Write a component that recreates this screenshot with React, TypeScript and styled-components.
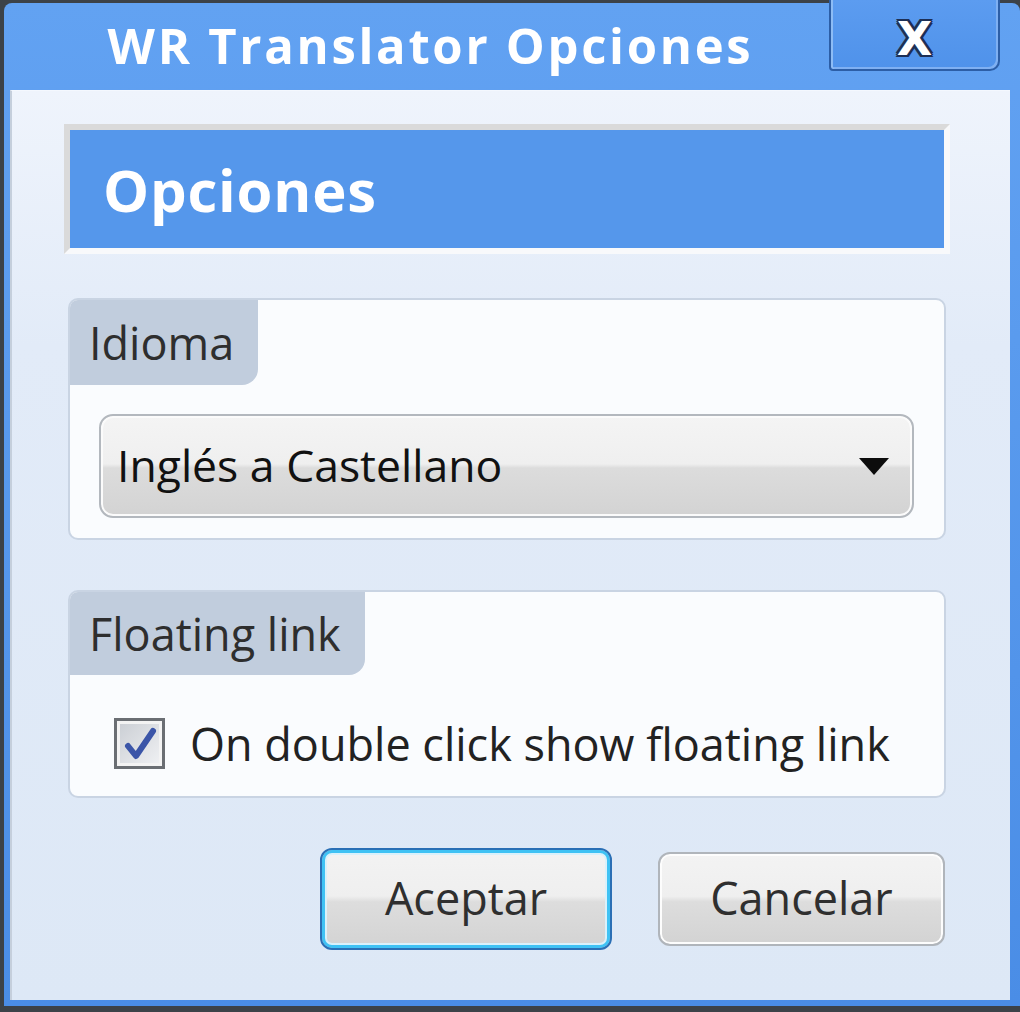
import React from "react";
import styled, { createGlobalStyle } from "styled-components";

const Global = createGlobalStyle`
  html, body { margin: 0; padding: 0; background: #3c4248; }
  body { font-family: "Open Sans", "DejaVu Sans", sans-serif; }
  * { box-sizing: border-box; }
`;

const Frame = styled.div`
  width: 1020px;
  height: 1012px;
  background: #3c4248;
  padding: 3px 0 6px 4px;
  display: flex;
`;

const Window = styled.div`
  flex: 1;
  display: flex;
  flex-direction: column;
  background: linear-gradient(#62a2f2, #4a8de6);
  border-radius: 8px 8px 0 0;
  padding: 0 10px 6px 6px;
`;

const TitleBar = styled.div`
  height: 87px;
  display: flex;
  align-items: flex-start;
`;

const Title = styled.div`
  flex: 1;
  text-align: center;
  color: #ffffff;
  font-weight: 700;
  font-size: 49px;
  line-height: 1;
  padding-top: 18px;
  padding-left: 22px;
  letter-spacing: 2.7px;
`;

const CloseButton = styled.div`
  width: 171px;
  height: 71px;
  margin-top: -3px;
  margin-right: 10px;
  background: linear-gradient(#5c9cf0, #4f92ea);
  border: 2px solid #2c5ea6;
  border-top: none;
  border-radius: 0 0 10px 4px;
  box-shadow: inset 2px 0 0 #8dbcf5, inset -2px -2px 0 #7fb0f2;
  display: flex;
  justify-content: center;
  align-items: flex-start;
  padding-top: 16px;
  color: #fff;
  font-family: "DejaVu Sans", sans-serif;
  font-weight: 700;
  font-size: 46px;
  line-height: 1;
  text-shadow: -2px 0 0 #1d2f55, 2px 0 0 #1d2f55, 0 -2px 0 #1d2f55, 0 2px 0 #1d2f55,
    -2px -2px 0 #1d2f55, 2px 2px 0 #1d2f55, -2px 2px 0 #1d2f55, 2px -2px 0 #1d2f55;
`;

const Body = styled.div`
  flex: 1;
  background: linear-gradient(#eff4fc 0%, #e2ebf8 28%, #dde8f6 100%);
  border-left: 2px solid #c5cfdc;
  border-top: 1px solid #f4f8fe;
  padding: 33px 60px 0 52px;
  display: flex;
  flex-direction: column;
`;

const Header = styled.div`
  height: 130px;
  border-style: solid;
  border-width: 6px;
  border-color: #dadada #f8f9fb #f8f9fb #dadada;
  background: #5597eb;
  display: flex;
  align-items: center;
  padding-left: 33px;
  color: #fff;
  font-weight: 700;
  font-size: 58px;
  letter-spacing: 0.8px;
`;

const Group = styled.div<{ $top: number; $height: number }>`
  margin: ${(p) => p.$top}px 4px 0 4px;
  height: ${(p) => p.$height}px;
  background: #fafcfe;
  border: 2px solid #c9d4e3;
  border-radius: 10px;
  display: flex;
  flex-direction: column;
  align-items: flex-start;
  overflow: hidden;
`;

const Tab = styled.div<{ $height: number }>`
  height: ${(p) => p.$height}px;
  background: #c1cddd;
  border-bottom-right-radius: 16px;
  padding: 0 24px 0 19px;
  display: flex;
  align-items: center;
  color: #2e2e2e;
  font-size: 45px;
`;

const Select = styled.div`
  align-self: stretch;
  margin: 29px 30px 0 29px;
  height: 104px;
  border: 2px solid #b3b8be;
  border-radius: 14px;
  box-shadow: inset 0 0 0 2px #fbfbfb;
  background: linear-gradient(#f4f4f4 0%, #efefef 48%, #dcdcdc 52%, #d3d3d3 100%);
  display: flex;
  align-items: center;
  justify-content: space-between;
  padding: 0 23px 4px 16px;
  color: #111;
  font-size: 44.5px;
`;

const Arrow = styled.div`
  width: 0;
  height: 0;
  border-left: 15px solid transparent;
  border-right: 15px solid transparent;
  border-top: 17px solid #0c0c0c;
  margin-top: 4px;
`;

const CheckRow = styled.label`
  display: flex;
  align-items: center;
  gap: 25px;
  margin: 38px 0 0 44px;
  color: #222;
  font-size: 45px;
`;

const Box = styled.div`
  width: 51px;
  height: 51px;
  border: 3px solid #6a6e73;
  box-shadow: inset 0 0 0 3px #f3f3f3;
  background: linear-gradient(135deg, #c9cdd3, #f1f2f4);
  display: flex;
  align-items: center;
  justify-content: center;
`;

const Buttons = styled.div`
  display: flex;
  justify-content: flex-end;
  align-items: center;
  gap: 46px;
  margin: 50px 5px 0 0;
`;

const Button = styled.div<{ $focused?: boolean }>`
  width: ${(p) => (p.$focused ? 292 : 287)}px;
  height: ${(p) => (p.$focused ? 102 : 94)}px;
  border-radius: 12px;
  border: 2px solid ${(p) => (p.$focused ? "#2a6fb5" : "#b0b5bb")};
  box-shadow: ${(p) =>
    p.$focused ? "inset 0 0 0 3px #3fc2f4, inset 0 0 0 5px #d9f1fb" : "inset 0 0 0 2px #fdfdfd"};
  background: linear-gradient(#f3f3f3 0%, #efefef 47%, #dddddd 53%, #d3d3d3 100%);
  display: flex;
  align-items: center;
  justify-content: center;
  color: #2f2f2f;
  font-size: 45px;
  padding-bottom: 4px;
`;

export default function App() {
  return (
    <>
      <Global />
      <Frame>
        <Window>
          <TitleBar>
            <Title>WR Translator Opciones</Title>
            <CloseButton>X</CloseButton>
          </TitleBar>
          <Body>
            <Header>Opciones</Header>
            <Group $top={44} $height={242}>
              <Tab $height={85}>Idioma</Tab>
              <Select>
                <span>Inglés a Castellano</span>
                <Arrow />
              </Select>
            </Group>
            <Group $top={50} $height={208}>
              <Tab $height={83}>Floating link</Tab>
              <CheckRow>
                <Box>
                  <svg width="34" height="34" viewBox="0 0 34 34">
                    <path
                      d="M5 19 L13 29 L30 4"
                      fill="none"
                      stroke="#3b55a8"
                      strokeWidth="6"
                      strokeLinecap="round"
                      strokeLinejoin="round"
                    />
                  </svg>
                </Box>
                <span>On double click show floating link</span>
              </CheckRow>
            </Group>
            <Buttons>
              <Button $focused>Aceptar</Button>
              <Button>Cancelar</Button>
            </Buttons>
          </Body>
        </Window>
      </Frame>
    </>
  );
}
